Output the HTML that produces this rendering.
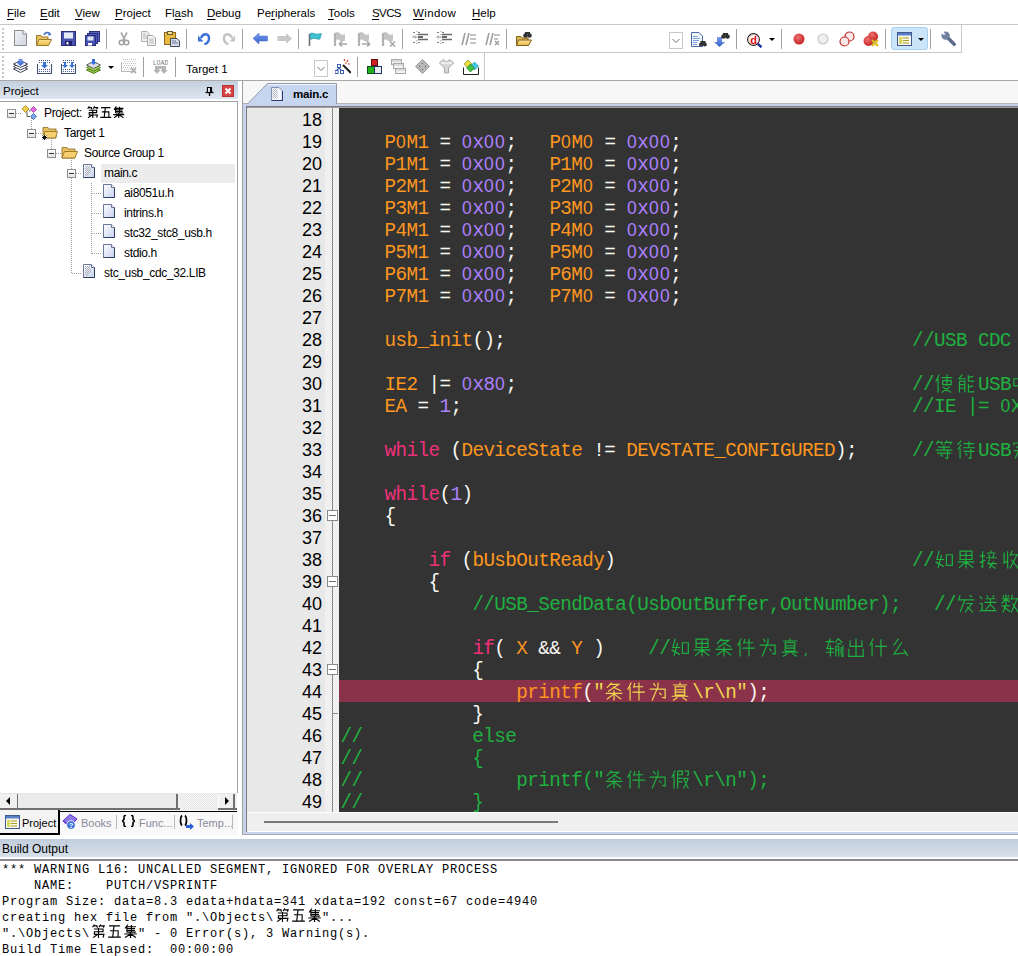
<!DOCTYPE html>
<html><head><meta charset="utf-8"><style>
*{box-sizing:border-box}
html,body{margin:0;padding:0;width:1018px;height:956px;overflow:hidden;background:#fff;position:relative;font-family:"Liberation Sans",sans-serif}
.a{position:absolute}
#menu span{position:absolute;top:7px;font-size:11.5px;line-height:13px;color:#000}
#menu u{text-decoration:underline;text-underline-offset:2px}
.tb{position:absolute}
.sep{position:absolute;width:1px;height:20px;background:#a0a0a0}
.ln{position:absolute;left:0;width:679px;height:22px;padding-left:1.5px;white-space:pre;font-family:"Liberation Mono",monospace;font-size:19.3px;letter-spacing:-0.5817px;line-height:22px;padding-top:2px}
.z{display:inline-block;width:11px;text-align:center;font-family:"Liberation Sans",sans-serif;font-size:17.5px;font-style:normal;line-height:4px;letter-spacing:0}
.ln b{font-weight:normal}
.hl{background:#8a3249}
.num{position:absolute;left:0;width:75px;text-align:right;font-size:18px;line-height:22px;color:#000;padding-top:1px}
.cj,.cjb,.cjt{display:inline-block;height:1px;position:relative}
.cj{width:22px} .cjb{width:16px} .cjt{width:13px}
.cj svg{position:absolute;left:0;top:-15.5px;width:20px;height:19px;fill:none;stroke:currentColor;stroke-width:1.0}
.cjb svg{position:absolute;left:1px;top:-12px;width:15px;height:14.5px;fill:none;stroke:#000;stroke-width:1.25}
.cjt svg{position:absolute;left:1.5px;top:-10.5px;width:13.5px;height:12.5px;fill:none;stroke:#000;stroke-width:1.45}
.bl{position:absolute;left:2px;white-space:pre;font-family:"Liberation Mono",monospace;font-size:12px;letter-spacing:0.8px;line-height:16px;color:#000}
.box{position:absolute;width:9px;height:9px;border:1px solid #8f8f8f;background:linear-gradient(#fff,#e0e0e0)}
.box:after{content:"";position:absolute;left:1px;top:3px;width:5px;height:1px;background:#333}
.ico{position:absolute;width:16px;height:16px}
.tt{position:absolute;font-size:12px;line-height:20px;letter-spacing:-0.35px;color:#000;white-space:pre}
</style></head><body>
<!-- menu -->
<div id="menu" class="a" style="left:0;top:0;width:1018px;height:24px">
<span style="left:7px"><u>F</u>ile</span><span style="left:40px"><u>E</u>dit</span><span style="left:75px"><u>V</u>iew</span><span style="left:115px"><u>P</u>roject</span><span style="left:165px">Fl<u>a</u>sh</span><span style="left:207px"><u>D</u>ebug</span><span style="left:257px">Pe<u>r</u>ipherals</span><span style="left:328px"><u>T</u>ools</span><span style="left:372px;letter-spacing:-0.6px"><u>S</u>VCS</span><span style="left:413px;letter-spacing:0.4px"><u>W</u>indow</span><span style="left:472px"><u>H</u>elp</span>
</div>
<div class="a" style="left:0;top:24px;width:1018px;height:1px;background:#c8c8c8"></div>
<!-- toolbar 1 -->
<svg width="0" height="0" style="position:absolute"><defs>
<linearGradient id="gPage" x1="0" y1="0" x2="1" y2="1"><stop offset="0" stop-color="#f4f4f6"/><stop offset="1" stop-color="#d0d4e4"/></linearGradient>
<linearGradient id="gFold" x1="0" y1="0" x2="0" y2="1"><stop offset="0" stop-color="#fbe59a"/><stop offset="1" stop-color="#e8b840"/></linearGradient>
<linearGradient id="gBlue" x1="0" y1="0" x2="0" y2="1"><stop offset="0" stop-color="#7c9cf0"/><stop offset="1" stop-color="#3562c8"/></linearGradient>
<radialGradient id="gRed" cx=".4" cy=".35" r=".7"><stop offset="0" stop-color="#f07070"/><stop offset="1" stop-color="#c02020"/></radialGradient>
</defs></svg><div class="a" style="left:891px;top:27px;width:37px;height:23px;background:#cce4f7;border:1px solid #a8d0f0;border-radius:3px"></div><div class="a" style="left:13px;top:30px;line-height:0"><svg width="14" height="16" viewBox="0 0 14 16"><path d="M1.5 0.5H10L13.5 4V15.5H1.5Z" fill="url(#gPage)" stroke="#8a8a8a"/><path d="M10 0.5V4H13.5" fill="#fff" stroke="#8a8a8a"/></svg></div><div class="a" style="left:36px;top:31px;line-height:0"><svg width="16" height="16" viewBox="0 0 16 16"><path d="M0.5 4.5H5L6 6H12V14.5H0.5Z" fill="#e8c25c" stroke="#9a7a30"/><path d="M3 8.5H15.5L12.5 14.5H0.5Z" fill="url(#gFold)" stroke="#9a7a30"/><path d="M8 4C9 1 12.5 0.5 14 3" fill="none" stroke="#3a6ac8" stroke-width="1.5"/><path d="M12.5 1.5L15.5 3.5L12.5 5Z" fill="#3a6ac8"/></svg></div><div class="a" style="left:61px;top:31px;line-height:0"><svg width="15" height="15" viewBox="0 0 15 15"><rect x="0.5" y="0.5" width="14" height="14" fill="#4a52b0" stroke="#2a3080"/><rect x="3" y="1.5" width="9" height="6" fill="#e4ecf8"/><rect x="4" y="10" width="7" height="4.5" fill="#20206a"/><rect x="5.5" y="11" width="2" height="2.5" fill="#fff"/></svg></div><div class="a" style="left:85px;top:31px;line-height:0"><svg width="15" height="15" viewBox="0 0 15 15"><rect x="4.5" y="0.5" width="10" height="10" fill="#5a62c0" stroke="#2a3080"/><rect x="2.5" y="2.5" width="10" height="10" fill="#5058b8" stroke="#2a3080"/><rect x="0.5" y="4.5" width="10" height="10" fill="#4a52b0" stroke="#2a3080"/><rect x="2.5" y="5.5" width="6" height="4" fill="#dde6f6"/><rect x="3" y="12" width="4" height="2.5" fill="#fff"/></svg></div><div class="a" style="left:118px;top:32px;line-height:0"><svg width="12" height="14" viewBox="0 0 12 14"><path d="M3 0.5L7 8M9 0.5L5 8" stroke="#a8a8a8" stroke-width="1.6" fill="none"/><circle cx="3.5" cy="10.5" r="2.3" fill="none" stroke="#a0a0a0" stroke-width="1.4"/><circle cx="8.5" cy="10.5" r="2.3" fill="none" stroke="#a0a0a0" stroke-width="1.4"/></svg></div><div class="a" style="left:141px;top:31px;line-height:0"><svg width="15" height="15" viewBox="0 0 15 15"><path d="M0.5 0.5H6L8 2.5V10.5H0.5Z" fill="#f0f0f0" stroke="#b0b0b0"/><path d="M6.5 4.5H12L14.5 7V14.5H6.5Z" fill="#f4f4f4" stroke="#a8a8a8"/><path d="M8 8H13M8 10H13M8 12H13M2 3H5M2 5H6M2 7H6" stroke="#b8b8b8"/></svg></div><div class="a" style="left:164px;top:31px;line-height:0"><svg width="16" height="16" viewBox="0 0 16 16"><rect x="0.5" y="1.5" width="11" height="12" fill="#e8b840" stroke="#8a6a20"/><rect x="3.5" y="0.5" width="5" height="3" fill="#f8e090" stroke="#6a5a30"/><path d="M6.5 7.5H13L15.5 10V15.5H6.5Z" fill="#d8dce8" stroke="#404858"/><path d="M8 10H12M8 12H14" stroke="#6878a0"/></svg></div><div class="a" style="left:198px;top:32px;line-height:0"><svg width="13" height="13" viewBox="0 0 13 13"><path d="M3 6C5 1 11 1 11 6.5C11 10 8.5 11.5 6.5 12.5" fill="none" stroke="#3a70d8" stroke-width="2.4"/><path d="M0 3.5L5.5 9.5L0 9.5Z" fill="#3a70d8"/></svg></div><div class="a" style="left:222px;top:32px;line-height:0"><svg width="13" height="13" viewBox="0 0 13 13"><path d="M10 6C8 1 2 1 2 6.5C2 10 4.5 11.5 6.5 12.5" fill="none" stroke="#c4c4c4" stroke-width="2.4"/><path d="M13 3.5L7.5 9.5L13 9.5Z" fill="#c4c4c4"/></svg></div><div class="a" style="left:253px;top:33px;line-height:0"><svg width="15" height="11" viewBox="0 0 15 11"><path d="M0 5.5L6 0V3H14.5V8H6V11Z" fill="url(#gBlue)" stroke="#3a66c8" stroke-width=".5"/></svg></div><div class="a" style="left:277px;top:33px;line-height:0"><svg width="15" height="11" viewBox="0 0 15 11"><path d="M15 5.5L9 0V3H0.5V8H9V11Z" fill="#c8c8c8"/></svg></div><div class="a" style="left:308px;top:32px;line-height:0"><svg width="14" height="14" viewBox="0 0 14 14"><path d="M1.5 2V14" stroke="#707070" stroke-width="1.6"/><path d="M2 1.5C5 0 7 3 10 2L13.5 1.5L12 7C9 8 7 5 2.5 7.5Z" fill="#40c0d0" stroke="#2090a8" stroke-width=".6"/></svg></div><div class="a" style="left:333px;top:32px;line-height:0"><svg width="15" height="15" viewBox="0 0 15 15"><path d="M1.5 1.5C3.5 0 5.5 0.5 7 2C8.5 3.5 10 3.5 11.5 2.5L11.5 8.5C10 9.5 8 9.5 6.5 8C5 6.5 3.5 7 2 8Z" fill="#c4c4c4" stroke="#b4b4b4" stroke-width=".6"/><path d="M2 1.5V14" stroke="#b0b0b0" stroke-width="2.2"/><path d="M6 12H14M6 12L9 9.5M6 12L9 14.5" stroke="#a8a8a8" stroke-width="1.6" fill="none"/></svg></div><div class="a" style="left:357px;top:32px;line-height:0"><svg width="15" height="15" viewBox="0 0 15 15"><path d="M1.5 1.5C3.5 0 5.5 0.5 7 2C8.5 3.5 10 3.5 11.5 2.5L11.5 8.5C10 9.5 8 9.5 6.5 8C5 6.5 3.5 7 2 8Z" fill="#c4c4c4" stroke="#b4b4b4" stroke-width=".6"/><path d="M2 1.5V14" stroke="#b0b0b0" stroke-width="2.2"/><path d="M5 12H13M13 12L10 9.5M13 12L10 14.5" stroke="#a8a8a8" stroke-width="1.6" fill="none"/></svg></div><div class="a" style="left:381px;top:32px;line-height:0"><svg width="15" height="15" viewBox="0 0 15 15"><path d="M1.5 1.5C3.5 0 5.5 0.5 7 2C8.5 3.5 10 3.5 11.5 2.5L11.5 8.5C10 9.5 8 9.5 6.5 8C5 6.5 3.5 7 2 8Z" fill="#c4c4c4" stroke="#b4b4b4" stroke-width=".6"/><path d="M2 1.5V14" stroke="#b0b0b0" stroke-width="2.2"/><path d="M9 9.5L14 14.5M14 9.5L9 14.5" stroke="#a8a8a8" stroke-width="1.6" fill="none"/></svg></div><div class="a" style="left:412px;top:31px;line-height:0"><svg width="16" height="14" viewBox="0 0 16 14"><path d="M1 1.5H3M6 1.5H8M1 11.5H3M6 11.5H8" stroke="#808080"/><path d="M6 3.5H16M6 8.5H16" stroke="#6a6a6a" stroke-width="1.5"/><path d="M6 6H11" stroke="#666" stroke-width="2"/><path d="M0 6H3" stroke="#b8b8b8" stroke-width="1.4"/><path d="M2.5 4L5 6L2.5 8Z" fill="#b0b0b0"/><path d="M5 0V14" stroke="#909090" stroke-dasharray="1 2"/></svg></div><div class="a" style="left:436px;top:31px;line-height:0"><svg width="16" height="14" viewBox="0 0 16 14"><path d="M1 1.5H3M6 1.5H8M1 11.5H3M6 11.5H8" stroke="#808080"/><path d="M6 3.5H16M6 8.5H16" stroke="#6a6a6a" stroke-width="1.5"/><path d="M6 6H11" stroke="#666" stroke-width="2"/><path d="M2 6H5" stroke="#b8b8b8" stroke-width="1.4"/><path d="M2.5 4L0 6L2.5 8Z" fill="#b0b0b0"/><path d="M5 0V14" stroke="#909090" stroke-dasharray="1 2"/></svg></div><div class="a" style="left:461px;top:32px;line-height:0"><svg width="15" height="14" viewBox="0 0 15 14"><path d="M4 1L1 13M8 1L5 13" stroke="#a0a0a0" stroke-width="1.6"/><path d="M9 3H15M9 7H15M9 11H15" stroke="#b0b0b0" stroke-width="1.3"/></svg></div><div class="a" style="left:485px;top:32px;line-height:0"><svg width="15" height="14" viewBox="0 0 15 14"><path d="M4 1L1 13M8 1L5 13" stroke="#a0a0a0" stroke-width="1.6"/><path d="M9 3H15M9 7H13" stroke="#b0b0b0" stroke-width="1.3"/><path d="M10 9L14 13M14 9L10 13" stroke="#a0a0a0" stroke-width="1.5"/></svg></div><div class="a" style="left:516px;top:32px;line-height:0"><svg width="16" height="14" viewBox="0 0 16 14"><path d="M0.5 4.5H5L6 6H12V13.5H0.5Z" fill="#e0b850" stroke="#806020"/><path d="M2.5 8H15.5L12.5 13.5H0.5Z" fill="url(#gFold)" stroke="#806020"/><circle cx="9.5" cy="3.5" r="2.3" fill="#303030"/><circle cx="13.5" cy="3.5" r="2.3" fill="#303030"/><rect x="9" y="0" width="5" height="2" fill="#303030"/></svg></div><div class="a" style="left:669px;top:32px;line-height:0"><svg width="14" height="17" viewBox="0 0 14 17"><rect x="0.5" y="0.5" width="13" height="16" fill="#fff" stroke="#c8c8c8"/><path d="M3.5 7L7 10.5L10.5 7" fill="none" stroke="#707070" stroke-width="1"/></svg></div><div class="a" style="left:691px;top:32px;line-height:0"><svg width="16" height="15" viewBox="0 0 16 15"><path d="M0.5 0.5H8L11.5 4V14.5H0.5Z" fill="#f4f6fc" stroke="#4a6aa8"/><path d="M2 4.5H7M2 6.5H9M2 8.5H8M2 10.5H6M2 12.5H6" stroke="#5a8ad8" stroke-width=".8"/><circle cx="10" cy="12.5" r="2" fill="#303030"/><circle cx="13.8" cy="12.5" r="2" fill="#303030"/><rect x="9.5" y="9" width="5" height="2.5" fill="#303030"/></svg></div><div class="a" style="left:714px;top:32px;line-height:0"><svg width="16" height="15" viewBox="0 0 16 15"><path d="M3 5H8V10H11L5.5 15L0 10H3Z" fill="url(#gBlue)"/><circle cx="9.5" cy="4.5" r="2.3" fill="#303030"/><circle cx="13.5" cy="4.5" r="2.3" fill="#303030"/><rect x="9" y="1" width="5" height="2.5" fill="#303030"/></svg></div><div class="a" style="left:747px;top:33px;line-height:0"><svg width="15" height="15" viewBox="0 0 15 15"><circle cx="6.5" cy="6.5" r="5.9" fill="#fff" stroke="#1a1a1a" stroke-width="1.1"/><circle cx="6.5" cy="6.5" r="4.9" fill="none" stroke="#f0a0a0" stroke-width=".8"/><text x="6.6" y="10.6" font-family="Liberation Sans" font-weight="bold" font-size="11" text-anchor="middle" fill="#e01010">d</text><path d="M10.8 10.8L14.5 14.2" stroke="#1a2a9a" stroke-width="2.4"/></svg></div><div class="a" style="left:793px;top:33px;line-height:0"><svg width="12" height="12" viewBox="0 0 12 12"><circle cx="6" cy="6" r="5.5" fill="url(#gRed)"/></svg></div><div class="a" style="left:817px;top:33px;line-height:0"><svg width="12" height="12" viewBox="0 0 12 12"><circle cx="6" cy="6" r="5" fill="#f0f0f0" stroke="#c8c8c8" stroke-width="1.2"/></svg></div><div class="a" style="left:839px;top:31px;line-height:0"><svg width="16" height="16" viewBox="0 0 16 16"><circle cx="10.5" cy="5.5" r="4.5" fill="#fde8e8" stroke="#c03030" stroke-width="1.2"/><circle cx="5.5" cy="10.5" r="4.5" fill="#fde8e8" stroke="#c03030" stroke-width="1.2"/></svg></div><div class="a" style="left:863px;top:31px;line-height:0"><svg width="16" height="16" viewBox="0 0 16 16"><circle cx="10" cy="5.5" r="5" fill="url(#gRed)"/><circle cx="5.5" cy="10" r="5" fill="url(#gRed)"/><path d="M9 9L15 15M15 9L9 15" stroke="#d8c020" stroke-width="2.2"/></svg></div><div class="a" style="left:897px;top:32px;line-height:0"><svg width="15" height="14" viewBox="0 0 15 14"><rect x="0.5" y="0.5" width="14" height="13" fill="#f8f8f0" stroke="#405a90"/><rect x="1" y="1" width="13" height="2.5" fill="#5a80c8"/><path d="M3 5V12M3 6H5M3 8.5H5M3 11H5M6 6H12M6 8.5H12M6 11H12" stroke="#a8a020" stroke-width="1.2"/><rect x="2" y="5" width="4" height="7" fill="#e8e860" opacity=".6"/></svg></div><div class="a" style="left:941px;top:31px;line-height:0"><svg width="15" height="15" viewBox="0 0 15 15"><path d="M5 5L13.2 13.2" stroke="#5a6a88" stroke-width="3.4" stroke-linecap="round"/><circle cx="4.6" cy="4.6" r="4.2" fill="#7080a0"/><path d="M1.5 0L4.5 3L3 4.5L0 1.5Z" fill="#fff"/><path d="M4 2.5L2.5 4" stroke="#9aa8c0" stroke-width="1"/></svg></div><div class="a" style="left:13px;top:59px;line-height:0"><svg width="15" height="15" viewBox="0 0 15 15"><path d="M0.5 10L7.5 6.5L14.5 10L7.5 13.5Z" fill="#fff" stroke="#303048" stroke-width=".9"/><path d="M0.5 7.5L7.5 4L14.5 7.5L7.5 11Z" fill="#fff" stroke="#303048" stroke-width=".9"/><path d="M0.5 5L7.5 1.5L14.5 5L7.5 8.5Z" fill="#f4f6fa" stroke="#303048" stroke-width=".9"/><path d="M5.5 0H9.5V3H12L7.5 7L3 3H5.5Z" fill="url(#gBlue)"/></svg></div><div class="a" style="left:37px;top:59px;line-height:0"><svg width="15" height="15" viewBox="0 0 15 15"><path d="M2 1h1v1h-1zM4 1h1v1h-1zM6 1h1v1h-1zM8 1h1v1h-1zM10 1h1v1h-1zM12 1h1v1h-1zM2 3h1v1h-1zM4 3h1v1h-1zM6 3h1v1h-1zM8 3h1v1h-1zM10 3h1v1h-1zM12 3h1v1h-1zM2 10h1v1h-1zM4 10h1v1h-1zM6 10h1v1h-1zM8 10h1v1h-1zM10 10h1v1h-1zM12 10h1v1h-1zM2 12h1v1h-1zM4 12h1v1h-1zM6 12h1v1h-1zM8 12h1v1h-1zM10 12h1v1h-1zM12 12h1v1h-1z" fill="#4a5a90"/><path d="M0.5 5V14.5H14.5V5" fill="none" stroke="#405070" stroke-width="1.1"/><path d="M6 3H9V6H11L7.5 9.5L4 6H6Z" fill="#3a70d8"/></svg></div><div class="a" style="left:61px;top:59px;line-height:0"><svg width="15" height="15" viewBox="0 0 15 15"><path d="M2 1h1v1h-1zM4 1h1v1h-1zM6 1h1v1h-1zM8 1h1v1h-1zM10 1h1v1h-1zM12 1h1v1h-1zM2 3h1v1h-1zM4 3h1v1h-1zM6 3h1v1h-1zM8 3h1v1h-1zM10 3h1v1h-1zM12 3h1v1h-1zM2 10h1v1h-1zM4 10h1v1h-1zM6 10h1v1h-1zM8 10h1v1h-1zM10 10h1v1h-1zM12 10h1v1h-1zM2 12h1v1h-1zM4 12h1v1h-1zM6 12h1v1h-1zM8 12h1v1h-1zM10 12h1v1h-1zM12 12h1v1h-1z" fill="#4a5a90"/><path d="M0.5 5V14.5H14.5V5" fill="none" stroke="#405070" stroke-width="1.1"/><path d="M3 3H5V6H7L4 9L1 6H3Z" fill="#3a70d8"/><path d="M10 3H12V6H14L11 9L8 6H10Z" fill="#3a70d8"/></svg></div><div class="a" style="left:86px;top:59px;line-height:0"><svg width="15" height="15" viewBox="0 0 15 15"><path d="M0.5 11L7.5 7.5L14.5 11L7.5 14.5Z" fill="#90c040" stroke="#508020"/><path d="M0.5 8.5L7.5 5L14.5 8.5L7.5 12Z" fill="#a8d060" stroke="#508020"/><path d="M0.5 6L7.5 2.5L14.5 6L7.5 9.5Z" fill="#e0e0e0" stroke="#606060"/><path d="M6 0H9V3H11L7.5 6L4 3H6Z" fill="#3a70d8"/></svg></div><div class="a" style="left:121px;top:59px;line-height:0"><svg width="16" height="15" viewBox="0 0 16 15"><path d="M2 0h1v1h-1zM4 0h1v1h-1zM6 0h1v1h-1zM8 0h1v1h-1zM10 0h1v1h-1zM12 0h1v1h-1zM14 0h1v1h-1zM3 2h1v1h-1zM5 2h1v1h-1zM7 2h1v1h-1zM9 2h1v1h-1zM11 2h1v1h-1zM13 2h1v1h-1zM2 4h1v1h-1zM4 4h1v1h-1zM6 4h1v1h-1zM8 4h1v1h-1zM10 4h1v1h-1zM12 4h1v1h-1zM14 4h1v1h-1zM3 6h1v1h-1zM5 6h1v1h-1zM7 6h1v1h-1zM9 6h1v1h-1zM11 6h1v1h-1zM13 6h1v1h-1zM2 8h1v1h-1zM4 8h1v1h-1zM6 8h1v1h-1zM8 8h1v1h-1zM10 8h1v1h-1zM12 8h1v1h-1zM14 8h1v1h-1zM3 10h1v1h-1zM5 10h1v1h-1zM7 10h1v1h-1zM9 10h1v1h-1zM11 10h1v1h-1zM13 10h1v1h-1z" fill="#c0c0c0"/><path d="M0.5 3V12.5H10" fill="none" stroke="#b8b8b8" stroke-width="1.1"/><path d="M10 9L15 14M15 9L10 14" stroke="#b0b0b0" stroke-width="1.8"/></svg></div><div class="a" style="left:153px;top:59px;line-height:0"><svg width="15" height="15" viewBox="0 0 15 15"><text x="7.5" y="5.5" font-family="Liberation Mono" font-size="6.5" text-anchor="middle" fill="#808080">LOAD</text><path d="M2 7H6V11H7.5L4 15L0.5 11H2ZM9 7H13V11H14.5L11 15L7.5 11H9Z" fill="#b4b4b4"/><rect x="3" y="7" width="9" height="3" fill="#b8b8b8"/></svg></div><div class="a" style="left:314px;top:60px;line-height:0"><svg width="14" height="17" viewBox="0 0 14 17"><rect x="0.5" y="0.5" width="13" height="16" fill="#fff" stroke="#c8c8c8"/><path d="M3.5 7L7 10.5L10.5 7" fill="none" stroke="#707070" stroke-width="1"/></svg></div><div class="a" style="left:335px;top:58px;line-height:0"><svg width="16" height="16" viewBox="0 0 16 16"><path d="M8 7L16 15" stroke="#202020" stroke-width="2"/><path d="M9 1L10 3M13 2L12 4M15 6L13 6" stroke="#d04040" stroke-width="1.2"/><circle cx="11" cy="5" r="1" fill="#c0a040"/><path d="M4 8V10M1 13L4 10L7 13" stroke="#3a60b0" fill="none" stroke-width="1.2"/><rect x="2.5" y="6.5" width="3" height="3" fill="#fff" stroke="#3a60b0"/><rect x="0" y="12.5" width="3" height="3" fill="#fff" stroke="#3a60b0"/><rect x="5.5" y="12.5" width="3" height="3" fill="#fff" stroke="#3a60b0"/></svg></div><div class="a" style="left:367px;top:59px;line-height:0"><svg width="15" height="15" viewBox="0 0 15 15"><rect x="4.5" y="0.5" width="6" height="6" fill="#d02020" stroke="#601010"/><rect x="0.5" y="7.5" width="7" height="7" fill="#20b020" stroke="#105010"/><rect x="7.5" y="7.5" width="7" height="7" fill="#e8ecf4" stroke="#203060"/></svg></div><div class="a" style="left:391px;top:59px;line-height:0"><svg width="15" height="15" viewBox="0 0 15 15"><rect x="0.5" y="0.5" width="10" height="5" fill="#f4f4f4" stroke="#a8a8a8"/><rect x="2.5" y="4.5" width="10" height="5" fill="#f4f4f4" stroke="#a8a8a8"/><rect x="4.5" y="9.5" width="10" height="5" fill="#f4f4f4" stroke="#a8a8a8"/><path d="M1 2H10M3 6H12M5 11H14" stroke="#c0c0c0"/></svg></div><div class="a" style="left:415px;top:59px;line-height:0"><svg width="15" height="15" viewBox="0 0 15 15"><path d="M7.5 0.5L14.5 7.5L7.5 14.5L0.5 7.5Z" fill="#b8b8b8" stroke="#9a9a9a"/><path d="M7.5 4V5M4 7.5H5M10 7.5H11M7.5 10V11" stroke="#707070" stroke-width="1.3"/></svg></div><div class="a" style="left:439px;top:59px;line-height:0"><svg width="15" height="15" viewBox="0 0 15 15"><path d="M0.5 4L4 0.5L7.5 3L11 0.5L14.5 4L9.5 9V14H5.5V9Z" fill="#d8d8d8" stroke="#a8a8a8"/><path d="M2 4H13" stroke="#fff"/></svg></div><div class="a" style="left:463px;top:59px;line-height:0"><svg width="16" height="16" viewBox="0 0 16 16"><path d="M0.5 8.5V15.5H15.5V8.5" fill="#fff" stroke="#202020"/><path d="M5 1L9 5L5 9L1 5Z" fill="#e8e040" stroke="#808020" stroke-width=".6"/><path d="M11.5 3L15.5 7L11.5 11L7.5 7Z" fill="#40c8e8" stroke="#2080a0" stroke-width=".6"/><path d="M7.5 5L11.5 9L7.5 13L3.5 9Z" fill="#40c040" stroke="#207020" stroke-width=".6"/></svg></div><div class="sep" style="left:106px;top:29px"></div><div class="sep" style="left:186px;top:29px"></div><div class="sep" style="left:242px;top:29px"></div><div class="sep" style="left:298px;top:29px"></div><div class="sep" style="left:402px;top:29px"></div><div class="sep" style="left:506px;top:29px"></div><div class="sep" style="left:736px;top:29px"></div><div class="sep" style="left:781px;top:29px"></div><div class="sep" style="left:885px;top:29px"></div><div class="sep" style="left:930px;top:29px"></div><div class="sep" style="left:143px;top:57px"></div><div class="sep" style="left:175px;top:57px"></div><div class="sep" style="left:357px;top:57px"></div><div class="a" style="left:769px;top:38px;width:0;height:0;border-left:3px solid transparent;border-right:3px solid transparent;border-top:3px solid #000"></div><div class="a" style="left:918px;top:38px;width:0;height:0;border-left:3px solid transparent;border-right:3px solid transparent;border-top:3px solid #000"></div><div class="a" style="left:108px;top:66px;width:0;height:0;border-left:3px solid transparent;border-right:3px solid transparent;border-top:3px solid #000"></div><div class="a" style="left:2px;top:28px;width:2px;height:2px;background:#c4c4cc"></div><div class="a" style="left:2px;top:32px;width:2px;height:2px;background:#c4c4cc"></div><div class="a" style="left:2px;top:36px;width:2px;height:2px;background:#c4c4cc"></div><div class="a" style="left:2px;top:40px;width:2px;height:2px;background:#c4c4cc"></div><div class="a" style="left:2px;top:44px;width:2px;height:2px;background:#c4c4cc"></div><div class="a" style="left:2px;top:48px;width:2px;height:2px;background:#c4c4cc"></div><div class="a" style="left:2px;top:56px;width:2px;height:2px;background:#c4c4cc"></div><div class="a" style="left:2px;top:60px;width:2px;height:2px;background:#c4c4cc"></div><div class="a" style="left:2px;top:64px;width:2px;height:2px;background:#c4c4cc"></div><div class="a" style="left:2px;top:68px;width:2px;height:2px;background:#c4c4cc"></div><div class="a" style="left:2px;top:72px;width:2px;height:2px;background:#c4c4cc"></div><div class="a" style="left:2px;top:76px;width:2px;height:2px;background:#c4c4cc"></div><div class="a" style="left:186px;top:60px;font-size:11.5px;line-height:18px;color:#000">Target 1</div>
<div class="a" style="left:0;top:52px;width:962px;height:1px;background:#c8c8c8"></div>
<div class="a" style="left:961px;top:24px;width:1px;height:29px;background:#c8c8c8"></div>
<!-- toolbar 2 -->
<div class="a" style="left:484px;top:52px;width:1px;height:28px;background:#c8c8c8"></div>
<div class="a" style="left:0;top:80px;width:1018px;height:1px;background:#a8a8a8"></div>
<!-- project panel -->
<div class="a" style="left:0;top:81px;width:238px;height:18px;background:linear-gradient(#c4d0de,#dde6f0)"></div>
<div class="a" style="left:3px;top:82px;font-size:11.5px;line-height:18px;color:#000">Project</div>
<svg class="a" style="left:222px;top:85px" width="12" height="12" viewBox="0 0 12 12"><rect width="12" height="12" fill="#d44545"/><rect x=".5" y=".5" width="11" height="11" fill="none" stroke="#b83030"/><path d="M3.5 3.5L8.5 8.5M8.5 3.5L3.5 8.5" stroke="#fff" stroke-width="1.8"/></svg>
<svg class="a" style="left:205px;top:86px" width="9" height="10" viewBox="0 0 9 10"><path d="M2.5 1.5H6.5V6.5H2.5Z" fill="#fff" stroke="#000" stroke-width="1.2"/><path d="M5.5 1V6.5" stroke="#000" stroke-width="1.2"/><path d="M0.5 6.5H8.5" stroke="#000" stroke-width="1.3"/><path d="M4.5 7V10" stroke="#000" stroke-width="1.3"/></svg>
<div class="a" style="left:0;top:101px;width:238px;height:692px;border:1px solid #a0a0a0;border-left:none;border-bottom:none;background:#fff">
<div class="a" style="left:16px;top:11px;width:5px;height:1px;background:repeating-linear-gradient(90deg,#a0a0a0 0 1px,transparent 1px 2px)"></div><div class="a" style="left:31px;top:16px;width:1px;height:11px;background:repeating-linear-gradient(180deg,#a0a0a0 0 1px,transparent 1px 2px)"></div><div class="a" style="left:36px;top:31px;width:5px;height:1px;background:repeating-linear-gradient(90deg,#a0a0a0 0 1px,transparent 1px 2px)"></div><div class="a" style="left:51px;top:36px;width:1px;height:11px;background:repeating-linear-gradient(180deg,#a0a0a0 0 1px,transparent 1px 2px)"></div><div class="a" style="left:56px;top:51px;width:5px;height:1px;background:repeating-linear-gradient(90deg,#a0a0a0 0 1px,transparent 1px 2px)"></div><div class="a" style="left:71px;top:56px;width:1px;height:11px;background:repeating-linear-gradient(180deg,#a0a0a0 0 1px,transparent 1px 2px)"></div><div class="a" style="left:76px;top:71px;width:6px;height:1px;background:repeating-linear-gradient(90deg,#a0a0a0 0 1px,transparent 1px 2px)"></div><div class="a" style="left:71px;top:76px;width:1px;height:96px;background:repeating-linear-gradient(180deg,#a0a0a0 0 1px,transparent 1px 2px)"></div><div class="a" style="left:72px;top:171px;width:10px;height:1px;background:repeating-linear-gradient(90deg,#a0a0a0 0 1px,transparent 1px 2px)"></div><div class="a" style="left:91px;top:81px;width:1px;height:71px;background:repeating-linear-gradient(180deg,#a0a0a0 0 1px,transparent 1px 2px)"></div><div class="a" style="left:92px;top:91px;width:10px;height:1px;background:repeating-linear-gradient(90deg,#a0a0a0 0 1px,transparent 1px 2px)"></div><div class="a" style="left:92px;top:111px;width:10px;height:1px;background:repeating-linear-gradient(90deg,#a0a0a0 0 1px,transparent 1px 2px)"></div><div class="a" style="left:92px;top:131px;width:10px;height:1px;background:repeating-linear-gradient(90deg,#a0a0a0 0 1px,transparent 1px 2px)"></div><div class="a" style="left:92px;top:151px;width:10px;height:1px;background:repeating-linear-gradient(90deg,#a0a0a0 0 1px,transparent 1px 2px)"></div><div class="box" style="left:7px;top:7px"></div><div class="ico" style="left:21px;top:3px;line-height:0"><svg width="17" height="16" viewBox="0 0 17 16"><path d="M1 4L4.5 0.5L8 4L4.5 7.5Z" fill="#f0d050" stroke="#a08020" stroke-width=".8"/><path d="M9.5 4.5L12.5 1.5L15.5 4.5L12.5 7.5Z" fill="#e070e0" stroke="#a030a0" stroke-width=".8"/><path d="M9.5 11.5L12.5 8.5L15.5 11.5L12.5 14.5Z" fill="#80a8f0" stroke="#3060b0" stroke-width=".8"/><path d="M6 6.5V11.5H9M8 6H9.5" fill="none" stroke="#555" stroke-width="1"/></svg></div><div class="tt" style="left:44px;top:1px">Project: <i class="cjt"><svg viewBox="0 0 16 16"><path d="M3.5 0.5L1.5 3.5M3 2H7M6 2.5L7 4M10.5 0.5L8.5 3.5M10 2H15M13 2.5L14 4M3 5.5H13V8.5H3.5V11.5H14L13 15M8 4.5V15.5M7 11.5L2 15"/></svg></i><i class="cjt"><svg viewBox="0 0 16 16"><path d="M2 2H14M7.5 2L6 14M3 7.5H12V14.5M1 14.5H15"/></svg></i><i class="cjt"><svg viewBox="0 0 16 16"><path d="M5 0.5L2 5M4 3V9M4 3H14M4 5H13M4 7H13M4 9H14M9 1V9M1 11H15M8 9V15.5M8 11L2 15M8 11L14 15"/></svg></i></div><div class="box" style="left:27px;top:27px"></div><div class="ico" style="left:41px;top:23px;line-height:0"><svg width="17" height="16" viewBox="0 0 17 16"><path d="M2 2.5H7L8 4H15V13H2Z" fill="#e8c060" stroke="#8a6820" stroke-width=".8"/><path d="M4 6.5H16.5L14.5 13H2Z" fill="#f8d070" stroke="#8a6820" stroke-width=".8"/><circle cx="3.5" cy="12.5" r="2.6" fill="#fff"/><path d="M1 12.5H6M3.5 10V15M1.7 10.7L5.3 14.3M5.3 10.7L1.7 14.3" stroke="#111" stroke-width="1"/></svg></div><div class="tt" style="left:64px;top:21px">Target 1</div><div class="box" style="left:47px;top:47px"></div><div class="ico" style="left:61px;top:43px;line-height:0"><svg width="17" height="16" viewBox="0 0 17 16"><path d="M1 2.5H6L7 4H14V13H1Z" fill="#e8c060" stroke="#8a6820" stroke-width=".8"/><path d="M3.5 6.5H16.5L14 13H1Z" fill="#f8d070" stroke="#8a6820" stroke-width=".8"/></svg></div><div class="tt" style="left:84px;top:41px">Source Group 1</div><div class="a" style="left:101px;top:62px;width:134px;height:19px;background:#ececec"></div><div class="box" style="left:67px;top:67px"></div><div class="ico" style="left:83px;top:62px;line-height:0"><svg width="12" height="14" viewBox="0 0 12 14"><defs><linearGradient id="gf" x1="0" y1="0" x2="1" y2="1"><stop offset="0" stop-color="#ffffff"/><stop offset="1" stop-color="#c4d0ec"/></linearGradient></defs><path d="M0.5 0.5H8.5L11.5 3.5V13.5H0.5Z" fill="url(#gf)" stroke="#6a7898"/><path d="M2 2H3V3H2ZM4 2H5V3H4ZM6 2H7V3H6ZM3 3H4V4H3ZM5 3H6V4H5ZM2 4H3V5H2ZM4 4H5V5H4ZM6 4H7V5H6ZM3 5H4V6H3ZM5 5H6V6H5ZM7 5H8V6H7ZM2 6H3V7H2ZM4 6H5V7H4ZM6 6H7V7H6ZM3 7H4V8H3ZM5 7H6V8H5ZM7 7H8V8H7ZM2 8H3V9H2ZM4 8H5V9H4ZM6 8H7V9H6ZM3 9H4V10H3ZM5 9H6V10H5ZM2 10H3V11H2ZM4 10H5V11H4ZM3 11H4V12H3Z" fill="#b0b0b8"/><path d="M11.5 3.5V13.5H0.5" fill="none" stroke="#2e3e60" stroke-width="1"/><path d="M8.5 0.5V3.5H11.5" fill="#fff" stroke="#6a7898"/></svg></div><div class="tt" style="left:104px;top:61px">main.c</div><div class="ico" style="left:103px;top:82px;line-height:0"><svg width="12" height="14" viewBox="0 0 12 14"><defs><linearGradient id="gf" x1="0" y1="0" x2="1" y2="1"><stop offset="0" stop-color="#ffffff"/><stop offset="1" stop-color="#c4d0ec"/></linearGradient></defs><path d="M0.5 0.5H8.5L11.5 3.5V13.5H0.5Z" fill="url(#gf)" stroke="#6a7898"/><path d="M11.5 3.5V13.5H0.5" fill="none" stroke="#2e3e60" stroke-width="1"/><path d="M8.5 0.5V3.5H11.5" fill="#fff" stroke="#6a7898"/></svg></div><div class="tt" style="left:124px;top:81px">ai8051u.h</div><div class="ico" style="left:103px;top:102px;line-height:0"><svg width="12" height="14" viewBox="0 0 12 14"><defs><linearGradient id="gf" x1="0" y1="0" x2="1" y2="1"><stop offset="0" stop-color="#ffffff"/><stop offset="1" stop-color="#c4d0ec"/></linearGradient></defs><path d="M0.5 0.5H8.5L11.5 3.5V13.5H0.5Z" fill="url(#gf)" stroke="#6a7898"/><path d="M11.5 3.5V13.5H0.5" fill="none" stroke="#2e3e60" stroke-width="1"/><path d="M8.5 0.5V3.5H11.5" fill="#fff" stroke="#6a7898"/></svg></div><div class="tt" style="left:124px;top:101px">intrins.h</div><div class="ico" style="left:103px;top:122px;line-height:0"><svg width="12" height="14" viewBox="0 0 12 14"><defs><linearGradient id="gf" x1="0" y1="0" x2="1" y2="1"><stop offset="0" stop-color="#ffffff"/><stop offset="1" stop-color="#c4d0ec"/></linearGradient></defs><path d="M0.5 0.5H8.5L11.5 3.5V13.5H0.5Z" fill="url(#gf)" stroke="#6a7898"/><path d="M11.5 3.5V13.5H0.5" fill="none" stroke="#2e3e60" stroke-width="1"/><path d="M8.5 0.5V3.5H11.5" fill="#fff" stroke="#6a7898"/></svg></div><div class="tt" style="left:124px;top:121px">stc32_stc8_usb.h</div><div class="ico" style="left:103px;top:142px;line-height:0"><svg width="12" height="14" viewBox="0 0 12 14"><defs><linearGradient id="gf" x1="0" y1="0" x2="1" y2="1"><stop offset="0" stop-color="#ffffff"/><stop offset="1" stop-color="#c4d0ec"/></linearGradient></defs><path d="M0.5 0.5H8.5L11.5 3.5V13.5H0.5Z" fill="url(#gf)" stroke="#6a7898"/><path d="M11.5 3.5V13.5H0.5" fill="none" stroke="#2e3e60" stroke-width="1"/><path d="M8.5 0.5V3.5H11.5" fill="#fff" stroke="#6a7898"/></svg></div><div class="tt" style="left:124px;top:141px">stdio.h</div><div class="ico" style="left:83px;top:162px;line-height:0"><svg width="12" height="14" viewBox="0 0 12 14"><defs><linearGradient id="gf" x1="0" y1="0" x2="1" y2="1"><stop offset="0" stop-color="#ffffff"/><stop offset="1" stop-color="#c4d0ec"/></linearGradient></defs><path d="M0.5 0.5H8.5L11.5 3.5V13.5H0.5Z" fill="url(#gf)" stroke="#6a7898"/><path d="M2 2H3V3H2ZM4 2H5V3H4ZM6 2H7V3H6ZM3 3H4V4H3ZM5 3H6V4H5ZM2 4H3V5H2ZM4 4H5V5H4ZM6 4H7V5H6ZM3 5H4V6H3ZM5 5H6V6H5ZM7 5H8V6H7ZM2 6H3V7H2ZM4 6H5V7H4ZM6 6H7V7H6ZM3 7H4V8H3ZM5 7H6V8H5ZM7 7H8V8H7ZM2 8H3V9H2ZM4 8H5V9H4ZM6 8H7V9H6ZM3 9H4V10H3ZM5 9H6V10H5ZM2 10H3V11H2ZM4 10H5V11H4ZM3 11H4V12H3Z" fill="#b0b0b8"/><path d="M11.5 3.5V13.5H0.5" fill="none" stroke="#2e3e60" stroke-width="1"/><path d="M8.5 0.5V3.5H11.5" fill="#fff" stroke="#6a7898"/></svg></div><div class="tt" style="left:104px;top:161px">stc_usb_cdc_32.LIB</div>
</div>
<!-- tree scrollbar -->
<div class="a" style="left:0;top:793px;width:237px;height:1px;background:#e4e4e4"></div>
<div class="a" style="left:0;top:794px;width:237px;height:14px;background:#f0f0f0"></div>
<div class="a" style="left:0;top:808px;width:180px;height:2px;background:#707070"></div><div class="a" style="left:218px;top:808px;width:19px;height:2px;background:#707070"></div>
<div class="a" style="left:17px;top:794px;width:1px;height:14px;background:#707070"></div>
<div class="a" style="left:6px;top:797px;width:0;height:0;border-top:4px solid transparent;border-bottom:4px solid transparent;border-right:4px solid #000"></div>
<div class="a" style="left:18px;top:794px;width:160px;height:14px;background:#ebebeb;border-right:2px solid #707070"></div>
<div class="a" style="left:180px;top:793px;width:38px;height:17px;background-color:#f8f8f8;background-image:linear-gradient(45deg,#e4e4e4 25%,transparent 25%,transparent 75%,#e4e4e4 75%),linear-gradient(45deg,#e4e4e4 25%,transparent 25%,transparent 75%,#e4e4e4 75%);background-size:2px 2px;background-position:0 0,1px 1px"></div>
<div class="a" style="left:218px;top:794px;width:17px;height:14px;background:#f0f0f0;border-left:1px solid #fff;border-right:2px solid #707070"></div>
<div class="a" style="left:225px;top:797px;width:0;height:0;border-top:4px solid transparent;border-bottom:4px solid transparent;border-left:4px solid #000"></div>
<div class="a" style="left:0;top:810px;width:238px;height:26px;background:#f8f8f8"></div>
<div class="a" style="left:58px;top:811px;width:179px;height:1px;background:#000"></div>
<div class="a" style="left:0;top:810px;width:60px;height:25px;background:#f4f4f4;border-right:2px solid #000;border-bottom:2px solid #000"></div>
<div class="a" style="left:5px;top:815px;line-height:0"><svg width="15" height="14" viewBox="0 0 15 14"><rect x="0.5" y="0.5" width="14" height="13" fill="#f8f8f0" stroke="#405a90"/><rect x="1" y="1" width="13" height="2.5" fill="#5a80c8"/><path d="M3 5V12M3 6H5M3 8.5H5M3 11H5M6 6H12M6 8.5H12M6 11H12" stroke="#a8a020" stroke-width="1.2"/><rect x="2" y="5" width="4" height="7" fill="#e8e860" opacity=".6"/></svg></div>
<div class="a" style="left:22px;top:815px;font-size:11px;line-height:16px;color:#000">Project</div>
<svg class="a" style="left:62px;top:814px" width="16" height="16" viewBox="0 0 16 16"><path d="M1 7L8 0.5L15 5L8.5 12Z" fill="#8c7ae8" stroke="#5a20d0" stroke-width="1"/><path d="M1 7L3 9L9.5 13" fill="none" stroke="#5a20d0" stroke-width="1"/><circle cx="9" cy="11" r="4.3" fill="#3a70d0" stroke="#fff" stroke-width=".8"/><text x="9" y="14" font-family="Liberation Sans" font-weight="bold" font-size="7.5" text-anchor="middle" fill="#fff">?</text></svg>
<div class="a" style="left:81px;top:815px;font-size:11px;line-height:16px;color:#8a8a98">Books</div>
<div class="a" style="left:116px;top:815px;width:1px;height:14px;background:#b8b8b8"></div>
<svg class="a" style="left:122px;top:815px" width="13" height="12" viewBox="0 0 13 12"><path d="M4 0.5H3C2 0.5 2 1.5 2 2.5V4.5L0.5 6L2 7.5V9.5C2 10.5 2 11.5 3 11.5H4M9 0.5H10C11 0.5 11 1.5 11 2.5V4.5L12.5 6L11 7.5V9.5C11 10.5 11 11.5 10 11.5H9" fill="none" stroke="#000" stroke-width="1.6"/></svg>
<div class="a" style="left:139px;top:815px;font-size:11px;line-height:16px;color:#8a8a98">Func...</div>
<div class="a" style="left:174px;top:815px;width:1px;height:14px;background:#b8b8b8"></div>
<svg class="a" style="left:179px;top:815px" width="16" height="15" viewBox="0 0 16 15"><path d="M3 0.5C1 2 1 9 3 10.5M6 0.5C8 2 8 9 6 10.5" fill="none" stroke="#000" stroke-width="1.7"/><path d="M7 10H11V8L15 11.5L11 15V13H7Z" fill="#2a60d8"/></svg>
<div class="a" style="left:197px;top:815px;font-size:11px;line-height:16px;color:#8a8a98">Temp...</div>
<div class="a" style="left:232px;top:815px;width:1px;height:14px;background:#b8b8b8"></div>
<!-- editor -->
<div class="a" style="left:242px;top:81px;width:776px;height:754px;background:#fff;border-left:1px solid #a0a0a0"></div>
<div class="a" style="left:243px;top:81px;width:775px;height:23px;background:#f7f7f7"></div>
<div class="a" style="left:243px;top:103px;width:775px;height:1px;background:#b4b4bc"></div>
<svg class="a" style="left:243px;top:81px" width="100" height="26" viewBox="0 0 100 26"><path d="M3.5 24L24.5 2.5H93.5V24Z" fill="#c6d6f0" stroke="#909aa8" stroke-width="1"/><path d="M25 3.5H93" stroke="#f0f4fc" stroke-width="1"/><rect x="0" y="23" width="100" height="3" fill="#c6d6f0"/></svg>
<div class="a" style="left:243px;top:104px;width:775px;height:2px;background:#c8d2ea"></div>
<div class="a" style="left:243px;top:104px;width:3px;height:730px;background:#c8d2ea"></div>
<div class="a" style="left:271px;top:87px;line-height:0"><svg width="12" height="14" viewBox="0 0 12 14"><defs><pattern id="dith" width="2" height="2" patternUnits="userSpaceOnUse"><rect width="1" height="1" fill="#b8b8c0"/><rect x="1" y="1" width="1" height="1" fill="#b8b8c0"/></pattern></defs><path d="M0.5 0.5H8L11.5 4V13.5H0.5Z" fill="#f4f6fc" stroke="#8090b0"/><rect x="1.5" y="1.5" width="5" height="10" fill="url(#dith)"/><path d="M11.5 4V13.5H0.5" fill="none" stroke="#28386a" stroke-width="1.2"/></svg></div>
<div class="a" style="left:293px;top:85px;font-size:11.5px;font-weight:bold;line-height:18px;color:#000;letter-spacing:-0.2px">main.c</div>
<div class="a" style="left:246px;top:106px;width:772px;height:1px;background:#7a7a80"></div>
<div class="a" style="left:246px;top:106px;width:1px;height:726px;background:#7a7a80"></div>
<div class="a" style="left:247px;top:107px;width:771px;height:1px;background:#a0a0a0"></div>
<div class="a" style="left:247px;top:108px;width:78px;height:704px;background:#e8e8e8">
<div class="num" style="top:0px">18</div><div class="num" style="top:22px">19</div><div class="num" style="top:44px">20</div><div class="num" style="top:66px">21</div><div class="num" style="top:88px">22</div><div class="num" style="top:110px">23</div><div class="num" style="top:132px">24</div><div class="num" style="top:154px">25</div><div class="num" style="top:176px">26</div><div class="num" style="top:198px">27</div><div class="num" style="top:220px">28</div><div class="num" style="top:242px">29</div><div class="num" style="top:264px">30</div><div class="num" style="top:286px">31</div><div class="num" style="top:308px">32</div><div class="num" style="top:330px">33</div><div class="num" style="top:352px">34</div><div class="num" style="top:374px">35</div><div class="num" style="top:396px">36</div><div class="num" style="top:418px">37</div><div class="num" style="top:440px">38</div><div class="num" style="top:462px">39</div><div class="num" style="top:484px">40</div><div class="num" style="top:506px">41</div><div class="num" style="top:528px">42</div><div class="num" style="top:550px">43</div><div class="num" style="top:572px">44</div><div class="num" style="top:594px">45</div><div class="num" style="top:616px">46</div><div class="num" style="top:638px">47</div><div class="num" style="top:660px">48</div><div class="num" style="top:682px">49</div>
</div>
<div class="a" style="left:325px;top:108px;width:14px;height:704px;background-color:#f8f8f8;background-image:linear-gradient(45deg,#e8e8e8 25%,transparent 25%,transparent 75%,#e8e8e8 75%),linear-gradient(45deg,#e8e8e8 25%,transparent 25%,transparent 75%,#e8e8e8 75%);background-size:2px 2px;background-position:0 0,1px 1px"></div>
<div class="a" style="left:332px;top:108px;width:1px;height:704px;background:#8a8a8a"></div>
<div class="a" style="left:327px;top:510px;width:11px;height:11px;border:1px solid #8a8a8a;background:#fff"></div><div class="a" style="left:329px;top:515px;width:7px;height:1px;background:#707070"></div><div class="a" style="left:327px;top:576px;width:11px;height:11px;border:1px solid #8a8a8a;background:#fff"></div><div class="a" style="left:329px;top:581px;width:7px;height:1px;background:#707070"></div><div class="a" style="left:327px;top:664px;width:11px;height:11px;border:1px solid #8a8a8a;background:#fff"></div><div class="a" style="left:329px;top:669px;width:7px;height:1px;background:#707070"></div><div class="a" style="left:333px;top:713px;width:5px;height:1px;background:#8a8a8a"></div>
<div class="a" style="left:339px;top:108px;width:679px;height:704px;background:#333333;overflow:hidden">
<div class="ln" style="top:0px"></div><div class="ln" style="top:22px"><b style="color:#f8f8f2">    </b><b style="color:#fd971f">P<i class="z">0</i>M1</b><b style="color:#f8f8f2"> = </b><b style="color:#ae81ff"><i class="z">0</i>x<i class="z">0</i><i class="z">0</i></b><b style="color:#f8f8f2">;   </b><b style="color:#fd971f">P<i class="z">0</i>M<i class="z">0</i></b><b style="color:#f8f8f2"> = </b><b style="color:#ae81ff"><i class="z">0</i>x<i class="z">0</i><i class="z">0</i></b><b style="color:#f8f8f2">;</b></div><div class="ln" style="top:44px"><b style="color:#f8f8f2">    </b><b style="color:#fd971f">P1M1</b><b style="color:#f8f8f2"> = </b><b style="color:#ae81ff"><i class="z">0</i>x<i class="z">0</i><i class="z">0</i></b><b style="color:#f8f8f2">;   </b><b style="color:#fd971f">P1M<i class="z">0</i></b><b style="color:#f8f8f2"> = </b><b style="color:#ae81ff"><i class="z">0</i>x<i class="z">0</i><i class="z">0</i></b><b style="color:#f8f8f2">;</b></div><div class="ln" style="top:66px"><b style="color:#f8f8f2">    </b><b style="color:#fd971f">P2M1</b><b style="color:#f8f8f2"> = </b><b style="color:#ae81ff"><i class="z">0</i>x<i class="z">0</i><i class="z">0</i></b><b style="color:#f8f8f2">;   </b><b style="color:#fd971f">P2M<i class="z">0</i></b><b style="color:#f8f8f2"> = </b><b style="color:#ae81ff"><i class="z">0</i>x<i class="z">0</i><i class="z">0</i></b><b style="color:#f8f8f2">;</b></div><div class="ln" style="top:88px"><b style="color:#f8f8f2">    </b><b style="color:#fd971f">P3M1</b><b style="color:#f8f8f2"> = </b><b style="color:#ae81ff"><i class="z">0</i>x<i class="z">0</i><i class="z">0</i></b><b style="color:#f8f8f2">;   </b><b style="color:#fd971f">P3M<i class="z">0</i></b><b style="color:#f8f8f2"> = </b><b style="color:#ae81ff"><i class="z">0</i>x<i class="z">0</i><i class="z">0</i></b><b style="color:#f8f8f2">;</b></div><div class="ln" style="top:110px"><b style="color:#f8f8f2">    </b><b style="color:#fd971f">P4M1</b><b style="color:#f8f8f2"> = </b><b style="color:#ae81ff"><i class="z">0</i>x<i class="z">0</i><i class="z">0</i></b><b style="color:#f8f8f2">;   </b><b style="color:#fd971f">P4M<i class="z">0</i></b><b style="color:#f8f8f2"> = </b><b style="color:#ae81ff"><i class="z">0</i>x<i class="z">0</i><i class="z">0</i></b><b style="color:#f8f8f2">;</b></div><div class="ln" style="top:132px"><b style="color:#f8f8f2">    </b><b style="color:#fd971f">P5M1</b><b style="color:#f8f8f2"> = </b><b style="color:#ae81ff"><i class="z">0</i>x<i class="z">0</i><i class="z">0</i></b><b style="color:#f8f8f2">;   </b><b style="color:#fd971f">P5M<i class="z">0</i></b><b style="color:#f8f8f2"> = </b><b style="color:#ae81ff"><i class="z">0</i>x<i class="z">0</i><i class="z">0</i></b><b style="color:#f8f8f2">;</b></div><div class="ln" style="top:154px"><b style="color:#f8f8f2">    </b><b style="color:#fd971f">P6M1</b><b style="color:#f8f8f2"> = </b><b style="color:#ae81ff"><i class="z">0</i>x<i class="z">0</i><i class="z">0</i></b><b style="color:#f8f8f2">;   </b><b style="color:#fd971f">P6M<i class="z">0</i></b><b style="color:#f8f8f2"> = </b><b style="color:#ae81ff"><i class="z">0</i>x<i class="z">0</i><i class="z">0</i></b><b style="color:#f8f8f2">;</b></div><div class="ln" style="top:176px"><b style="color:#f8f8f2">    </b><b style="color:#fd971f">P7M1</b><b style="color:#f8f8f2"> = </b><b style="color:#ae81ff"><i class="z">0</i>x<i class="z">0</i><i class="z">0</i></b><b style="color:#f8f8f2">;   </b><b style="color:#fd971f">P7M<i class="z">0</i></b><b style="color:#f8f8f2"> = </b><b style="color:#ae81ff"><i class="z">0</i>x<i class="z">0</i><i class="z">0</i></b><b style="color:#f8f8f2">;</b></div><div class="ln" style="top:198px"></div><div class="ln" style="top:220px"><b style="color:#f8f8f2">    </b><b style="color:#fd971f">usb_init</b><b style="color:#f8f8f2">();</b><b style="color:#f8f8f2">                                     </b><b style="color:#1fb040">//USB CDC <i class="cj" style="color:#1fb040"><svg viewBox="0 0 16 16"><path d="M1 5H5.5M3.5 1V14.5L2 13.5M1 10.5L5.5 8.5M10.5 0.5V2M7 2.5H14.5M8.5 3.5L9.5 6M13 3.5L12 6M6.5 6.5H15.5M9.5 7.5L8 11.5H15.5M13 9.5L9 15.5M9.5 12.5L14.5 15.5"/></svg></i><i class="cj" style="color:#1fb040"><svg viewBox="0 0 16 16"><path d="M3 3H13V13H3Z"/></svg></i><i class="cj" style="color:#1fb040"><svg viewBox="0 0 16 16"><path d="M1 2H8M2 4H7V15H2ZM4 4V8M5 4V8M2 10H7M9 3H14V8H9V15H15V13"/></svg></i><i class="cj" style="color:#1fb040"><svg viewBox="0 0 16 16"><path d="M2 1H14V4H2ZM6 1V4M10 1V4M1 6H15M8 5V7M4 8H12V14H4ZM4 10H12M4 12H12M1 15H15"/></svg></i></b></div><div class="ln" style="top:242px"></div><div class="ln" style="top:264px"><b style="color:#f8f8f2">    </b><b style="color:#fd971f">IE2</b><b style="color:#f8f8f2"> |= </b><b style="color:#ae81ff"><i class="z">0</i>x8<i class="z">0</i></b><b style="color:#f8f8f2">;</b><b style="color:#f8f8f2">                                    </b><b style="color:#1fb040">//<i class="cj" style="color:#1fb040"><svg viewBox="0 0 16 16"><path d="M4 0.5L1 6.5M3 4V15.5M6 3H15M10.5 0.5V10M7 5.5H14V9H7ZM7 11L14 15.5M13 11L6 15.5"/></svg></i><i class="cj" style="color:#1fb040"><svg viewBox="0 0 16 16"><path d="M5 0.5L2 4H8M2.5 6H7V15.5M2.5 6V15.5M2.5 9H7M2.5 12H7M10 1V6H15M10 3L14 2M10 8.5V15H15M10 11L14 10"/></svg></i>USB<i class="cj" style="color:#1fb040"><svg viewBox="0 0 16 16"><path d="M2 4H14V10H2ZM8 0.5V15.5"/></svg></i><i class="cj" style="color:#1fb040"><svg viewBox="0 0 16 16"><path d="M2 2H14V14H2Z"/></svg></i></b></div><div class="ln" style="top:286px"><b style="color:#f8f8f2">    </b><b style="color:#fd971f">EA</b><b style="color:#f8f8f2"> = </b><b style="color:#ae81ff">1</b><b style="color:#f8f8f2">;</b><b style="color:#f8f8f2">                                         </b><b style="color:#1fb040">//IE |= <i class="z">0</i>X8<i class="z">0</i></b></div><div class="ln" style="top:308px"></div><div class="ln" style="top:330px"><b style="color:#f8f8f2">    </b><b style="color:#f0307a">while</b><b style="color:#f8f8f2"> (</b><b style="color:#fd971f">DeviceState</b><b style="color:#f8f8f2"> != </b><b style="color:#fd971f">DEVSTATE_CONFIGURED</b><b style="color:#f8f8f2">);</b><b style="color:#f8f8f2">     </b><b style="color:#1fb040">//<i class="cj" style="color:#1fb040"><svg viewBox="0 0 16 16"><path d="M3.5 0.5L1.5 3.5M3 2H7M6 2.5L7 4M10.5 0.5L8.5 3.5M10 2H15M13 2.5L14 4M3 6H13M8 4.5V8M1 8.5H15M2 11H14M11 9V15.5L9 15M5 12L7 14"/></svg></i><i class="cj" style="color:#1fb040"><svg viewBox="0 0 16 16"><path d="M4 0.5L1 4M4 4L1 8M3 7V15.5M6 3H15M10.5 1V6M5.5 6.5H15.5M6 9.5H15M12 7.5V15.5L10 15M7.5 11L9 13"/></svg></i>USB<i class="cj" style="color:#1fb040"><svg viewBox="0 0 16 16"><path d="M8 0.5V2M2 4.5V2.5H14V4.5M4 6H12M2 9H14M6 9L3 15.5M10 9V15H15V13"/></svg></i><i class="cj" style="color:#1fb040"><svg viewBox="0 0 16 16"><path d="M2 2H14V14H2Z"/></svg></i><i class="cj" style="color:#1fb040"><svg viewBox="0 0 16 16"><path d="M1 2H8M2 4H7V15H2ZM4 4V8M5 4V8M2 10H7M9 3H14V8H9V15H15V13"/></svg></i><i class="cj" style="color:#1fb040"><svg viewBox="0 0 16 16"><path d="M2 1H14V4H2ZM6 1V4M10 1V4M1 6H15M8 5V7M4 8H12V14H4ZM4 10H12M4 12H12M1 15H15"/></svg></i></b></div><div class="ln" style="top:352px"></div><div class="ln" style="top:374px"><b style="color:#f8f8f2">    </b><b style="color:#f0307a">while</b><b style="color:#f8f8f2">(</b><b style="color:#ae81ff">1</b><b style="color:#f8f8f2">)</b></div><div class="ln" style="top:396px"><b style="color:#f8f8f2">    {</b></div><div class="ln" style="top:418px"></div><div class="ln" style="top:440px"><b style="color:#f8f8f2">        </b><b style="color:#f0307a">if</b><b style="color:#f8f8f2"> (</b><b style="color:#fd971f">bUsbOutReady</b><b style="color:#f8f8f2">)</b><b style="color:#f8f8f2">                           </b><b style="color:#1fb040">//<i class="cj" style="color:#1fb040"><svg viewBox="0 0 16 16"><path d="M4 0.5L2 8H8M6 4L3 15M1 10L8 14M10 4H15V13H10Z"/></svg></i><i class="cj" style="color:#1fb040"><svg viewBox="0 0 16 16"><path d="M3 1H13V8H3ZM3 4.5H13M8 1V15.5M1 10H15M8 10L2 15M8 10L14 15"/></svg></i><i class="cj" style="color:#1fb040"><svg viewBox="0 0 16 16"><path d="M1 5H5.5M3.5 1V14.5L2 13.5M1 10.5L5.5 8.5M10.5 0.5V2M7 2.5H14.5M8.5 3.5L9.5 6M13 3.5L12 6M6.5 6.5H15.5M9.5 7.5L8 11.5H15.5M13 9.5L9 15.5M9.5 12.5L14.5 15.5"/></svg></i><i class="cj" style="color:#1fb040"><svg viewBox="0 0 16 16"><path d="M3 2V11L6 9M6 1V15.5M10 0.5L8 5M9 4H15M14 4L8 15.5M9 8L15 15.5"/></svg></i><i class="cj" style="color:#1fb040"><svg viewBox="0 0 16 16"><path d="M2 2H14V14H2Z"/></svg></i><i class="cj" style="color:#1fb040"><svg viewBox="0 0 16 16"><path d="M2 1L3 3M7 1L6 3M1 4H8M4.5 0.5V8M4.5 4L1 8M4.5 4L8 7M1 10H8M5 8L2 15.5M3 11L8 15M10 0.5L9 5M9.5 4H15M14 4L9 15.5M10 8L15 15.5"/></svg></i><i class="cj" style="color:#1fb040"><svg viewBox="0 0 16 16"><path d="M2 2H14V14H2Z"/></svg></i></b></div><div class="ln" style="top:462px"><b style="color:#f8f8f2">        {</b></div><div class="ln" style="top:484px"><b style="color:#f8f8f2">            </b><b style="color:#1fb040">//USB_SendData(UsbOutBuffer,OutNumber);   //<i class="cj" style="color:#1fb040"><svg viewBox="0 0 16 16"><path d="M3 1L2 5M1 5H15M11 1L13 2.5M7 5L3 15.5M8 8H13L7 15.5M9 11L14 15.5"/></svg></i><i class="cj" style="color:#1fb040"><svg viewBox="0 0 16 16"><path d="M1 2L3 4M1 8H3V13L1 15M3 14H15M7 1L8 3M13 1L12 3M6 4H14M5 7H15M10 4V9L6 13M10 9L14 13"/></svg></i><i class="cj" style="color:#1fb040"><svg viewBox="0 0 16 16"><path d="M2 1L3 3M7 1L6 3M1 4H8M4.5 0.5V8M4.5 4L1 8M4.5 4L8 7M1 10H8M5 8L2 15.5M3 11L8 15M10 0.5L9 5M9.5 4H15M14 4L9 15.5M10 8L15 15.5"/></svg></i><i class="cj" style="color:#1fb040"><svg viewBox="0 0 16 16"><path d="M2 2H14V14H2Z"/></svg></i></b></div><div class="ln" style="top:506px"></div><div class="ln" style="top:528px"><b style="color:#f8f8f2">            </b><b style="color:#f0307a">if</b><b style="color:#f8f8f2">( </b><b style="color:#fd971f">X</b><b style="color:#f8f8f2"> &amp;&amp; </b><b style="color:#fd971f">Y</b><b style="color:#f8f8f2"> )    </b><b style="color:#1fb040">//<i class="cj" style="color:#1fb040"><svg viewBox="0 0 16 16"><path d="M4 0.5L2 8H8M6 4L3 15M1 10L8 14M10 4H15V13H10Z"/></svg></i><i class="cj" style="color:#1fb040"><svg viewBox="0 0 16 16"><path d="M3 1H13V8H3ZM3 4.5H13M8 1V15.5M1 10H15M8 10L2 15M8 10L14 15"/></svg></i><i class="cj" style="color:#1fb040"><svg viewBox="0 0 16 16"><path d="M6 0.5L2 5M5 2H12L3 8M7 4L14 7.5M1 9.5H15M8 7V15.5M8 10L2 14.5M8 10L14 14.5"/></svg></i><i class="cj" style="color:#1fb040"><svg viewBox="0 0 16 16"><path d="M4 0.5L1 6.5M3 4V15.5M7 1L6 5M6.5 4H14M5 8.5H15.5M10.5 0.5V15.5"/></svg></i><i class="cj" style="color:#1fb040"><svg viewBox="0 0 16 16"><path d="M4 1L6 3.5M1 6H14V13.5L11.5 13M8 0.5V4L3 15.5M9 9L11 11"/></svg></i><i class="cj" style="color:#1fb040"><svg viewBox="0 0 16 16"><path d="M8 0.5V3M2 2.5H14M4 4H12V11H4ZM4 6.5H12M4 8.5H12M1 12H15M6 13L2 15.5M10 13L14 15.5"/></svg></i><i class="cj" style="color:#1fb040"><svg viewBox="0 0 16 16"><path d="M3 12.5V14L2 15.5"/></svg></i><i class="cj" style="color:#1fb040"><svg viewBox="0 0 16 16"><path d="M1 3H8M5 0.5L2 9H8M5 6V15.5M1 12H8M11.5 0.5L9 4M11.5 0.5L15 4M10 5H14M9.5 7H12V15.5M9.5 7V15.5M9.5 10H12M14 7.5V14M15.5 6V15.5L14 15"/></svg></i><i class="cj" style="color:#1fb040"><svg viewBox="0 0 16 16"><path d="M8 0.5V15.5M3 2V7H13V2M2 9V15.5H14V9"/></svg></i><i class="cj" style="color:#1fb040"><svg viewBox="0 0 16 16"><path d="M4 0.5L1 6.5M3 4V15.5M5.5 7H15.5M10.5 1V15.5"/></svg></i><i class="cj" style="color:#1fb040"><svg viewBox="0 0 16 16"><path d="M7 0.5L2.5 6.5M9.5 3.5L3 13.5L14 12.5M11 9.5L14.5 15"/></svg></i></b></div><div class="ln" style="top:550px"><b style="color:#f8f8f2">            {</b></div><div class="ln hl" style="top:572px"><b style="color:#f8f8f2">                </b><b style="color:#fd971f">printf</b><b style="color:#f8f8f2">(</b><b style="color:#f0d850">"<i class="cj" style="color:#f0d850"><svg viewBox="0 0 16 16"><path d="M6 0.5L2 5M5 2H12L3 8M7 4L14 7.5M1 9.5H15M8 7V15.5M8 10L2 14.5M8 10L14 14.5"/></svg></i><i class="cj" style="color:#f0d850"><svg viewBox="0 0 16 16"><path d="M4 0.5L1 6.5M3 4V15.5M7 1L6 5M6.5 4H14M5 8.5H15.5M10.5 0.5V15.5"/></svg></i><i class="cj" style="color:#f0d850"><svg viewBox="0 0 16 16"><path d="M4 1L6 3.5M1 6H14V13.5L11.5 13M8 0.5V4L3 15.5M9 9L11 11"/></svg></i><i class="cj" style="color:#f0d850"><svg viewBox="0 0 16 16"><path d="M8 0.5V3M2 2.5H14M4 4H12V11H4ZM4 6.5H12M4 8.5H12M1 12H15M6 13L2 15.5M10 13L14 15.5"/></svg></i>\r\n"</b><b style="color:#f8f8f2">);</b></div><div class="ln" style="top:594px"><b style="color:#f8f8f2">            }</b></div><div class="ln" style="top:616px"><b style="color:#1fb040">//          else</b></div><div class="ln" style="top:638px"><b style="color:#1fb040">//          {</b></div><div class="ln" style="top:660px"><b style="color:#1fb040">//              printf("<i class="cj" style="color:#1fb040"><svg viewBox="0 0 16 16"><path d="M6 0.5L2 5M5 2H12L3 8M7 4L14 7.5M1 9.5H15M8 7V15.5M8 10L2 14.5M8 10L14 14.5"/></svg></i><i class="cj" style="color:#1fb040"><svg viewBox="0 0 16 16"><path d="M4 0.5L1 6.5M3 4V15.5M7 1L6 5M6.5 4H14M5 8.5H15.5M10.5 0.5V15.5"/></svg></i><i class="cj" style="color:#1fb040"><svg viewBox="0 0 16 16"><path d="M4 1L6 3.5M1 6H14V13.5L11.5 13M8 0.5V4L3 15.5M9 9L11 11"/></svg></i><i class="cj" style="color:#1fb040"><svg viewBox="0 0 16 16"><path d="M4 0.5L1 6.5M3 4V15.5M6 1V15.5M6 1H10V4H6M6 7H10M6 10H10M12 1H15V4L14 5M11 7H15M11 7L15 15.5M15 7L11 15.5"/></svg></i>\r\n");</b></div><div class="ln" style="top:682px"><b style="color:#1fb040">//          }</b></div>
</div>
<div class="a" style="left:247px;top:812px;width:771px;height:1px;background:#fff"></div>
<div class="a" style="left:247px;top:813px;width:771px;height:18px;background:#efefef"></div>
<div class="a" style="left:247px;top:831px;width:771px;height:1px;background:#fff"></div>
<div class="a" style="left:243px;top:832px;width:775px;height:2px;background:#c8d2ea"></div>
<div class="a" style="left:242px;top:834px;width:776px;height:1px;background:#a8a8b0"></div>
<div class="a" style="left:264px;top:821px;width:294px;height:2px;background:#7a7a7a"></div>
<!-- build output -->
<div class="a" style="left:0;top:835px;width:1018px;height:4px;background:#fff"></div><div class="a" style="left:0;top:839px;width:1018px;height:18px;background:linear-gradient(#c2cedb,#d6e0ea)"></div><div class="a" style="left:0;top:857px;width:1018px;height:2px;background:#fbfbfb"></div>
<div class="a" style="left:2px;top:840px;font-size:12px;line-height:18px;color:#000">Build Output</div>
<div class="a" style="left:0;top:859px;width:1018px;height:2px;background:#8a8a8a"></div>
<div class="a" style="left:0;top:862px;width:1018px;height:94px">
<div class="bl" style="top:0px">*** WARNING L16: UNCALLED SEGMENT, IGNORED FOR OVERLAY PROCESS</div><div class="bl" style="top:16px">    NAME:    PUTCH/VSPRINTF</div><div class="bl" style="top:32px">Program Size: data=8.3 edata+hdata=341 xdata=192 const=67 code=4940</div><div class="bl" style="top:48px">creating hex file from ".\Objects\<i class="cjb"><svg viewBox="0 0 16 16"><path d="M3.5 0.5L1.5 3.5M3 2H7M6 2.5L7 4M10.5 0.5L8.5 3.5M10 2H15M13 2.5L14 4M3 5.5H13V8.5H3.5V11.5H14L13 15M8 4.5V15.5M7 11.5L2 15"/></svg></i><i class="cjb"><svg viewBox="0 0 16 16"><path d="M2 2H14M7.5 2L6 14M3 7.5H12V14.5M1 14.5H15"/></svg></i><i class="cjb"><svg viewBox="0 0 16 16"><path d="M5 0.5L2 5M4 3V9M4 3H14M4 5H13M4 7H13M4 9H14M9 1V9M1 11H15M8 9V15.5M8 11L2 15M8 11L14 15"/></svg></i>"...</div><div class="bl" style="top:64px">".\Objects\<i class="cjb"><svg viewBox="0 0 16 16"><path d="M3.5 0.5L1.5 3.5M3 2H7M6 2.5L7 4M10.5 0.5L8.5 3.5M10 2H15M13 2.5L14 4M3 5.5H13V8.5H3.5V11.5H14L13 15M8 4.5V15.5M7 11.5L2 15"/></svg></i><i class="cjb"><svg viewBox="0 0 16 16"><path d="M2 2H14M7.5 2L6 14M3 7.5H12V14.5M1 14.5H15"/></svg></i><i class="cjb"><svg viewBox="0 0 16 16"><path d="M5 0.5L2 5M4 3V9M4 3H14M4 5H13M4 7H13M4 9H14M9 1V9M1 11H15M8 9V15.5M8 11L2 15M8 11L14 15"/></svg></i>" - 0 Error(s), 3 Warning(s).</div><div class="bl" style="top:80px">Build Time Elapsed:  00:00:00</div>
</div>
</body></html>
